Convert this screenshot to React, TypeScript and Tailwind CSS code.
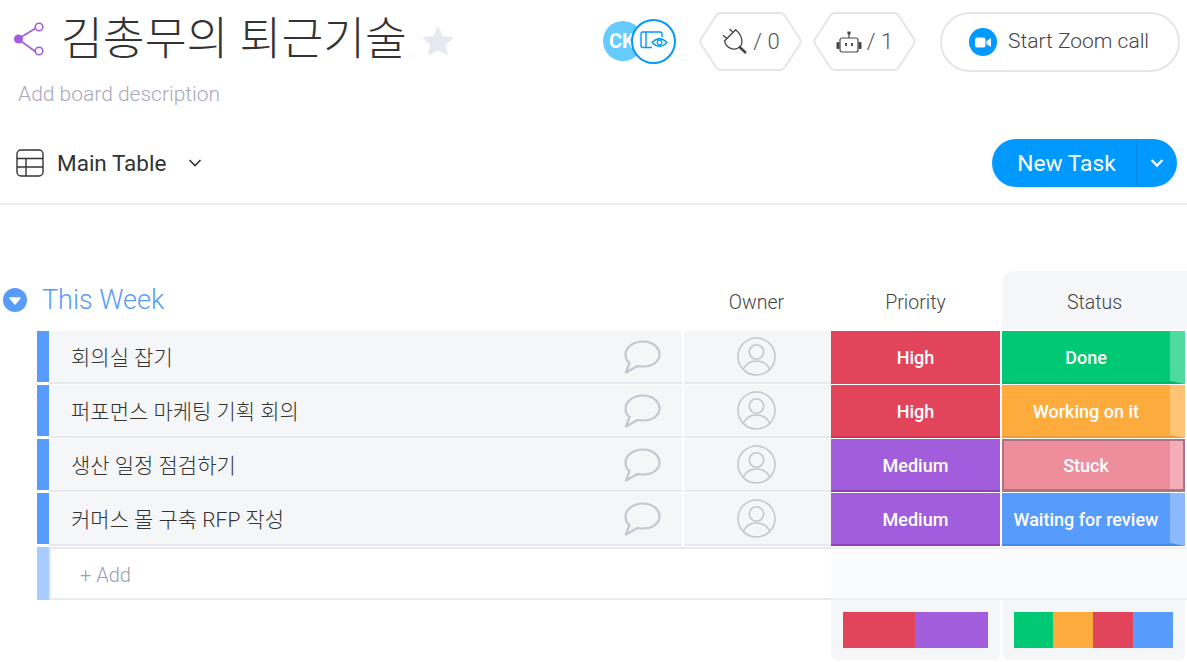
const tasks = [
  { name: '회의실 잡기', priority: 'High', status: 'Done' },
  { name: '퍼포먼스 마케팅 기획 회의', priority: 'High', status: 'Working on it' },
  { name: '생산 일정 점검하기', priority: 'Medium', status: 'Stuck' },
  { name: '커머스 몰 구축 RFP 작성', priority: 'Medium', status: 'Waiting for review' },
]

const priorityClass: Record<string, string> = {
  High: 'bg-[#e2445c] border-[#d0304a]',
  Medium: 'bg-[#a25ddc] border-[#8f3fb8]',
}

const statusClass: Record<string, { main: string; tail: string; fold: string }> = {
  Done: { main: 'bg-[#00c875] border-b-2 border-[#00b86b]', tail: 'bg-[#4ddb9e]', fold: 'bg-[#00b86b]' },
  'Working on it': { main: 'bg-[#fdab3d] border-b-2 border-[#ee9c30]', tail: 'bg-[#fec476]', fold: 'bg-[#ee9c30]' },
  Stuck: { main: 'bg-[#ee8e9d] pr-0.5', tail: 'bg-[#f4aeb9]', fold: '' },
  'Waiting for review': { main: 'bg-[#579bfc] border-b-2 border-[#4389ee]', tail: 'bg-[#8ab9fd]', fold: 'bg-[#4389ee]' },
}

function ShareIcon() {
  return (
    <svg width="32" height="36" viewBox="0 0 32 36" className="shrink-0">
      <path d="M5 17 L23 6 M5 17 L23 30" stroke="#a25ddc" strokeWidth="1.6" fill="none" />
      <circle cx="5.5" cy="17" r="4.5" fill="#a25ddc" />
      <circle cx="26" cy="5" r="3.8" fill="#fff" stroke="#a25ddc" strokeWidth="1.6" />
      <circle cx="26" cy="29" r="3.8" fill="#fff" stroke="#a25ddc" strokeWidth="1.6" />
    </svg>
  )
}

function StarIcon() {
  return (
    <svg width="32" height="30" viewBox="0 0 32 30">
      <path
        d="M16 2 L20 11 L30 12 L22.5 18.5 L25 28 L16 23 L7 28 L9.5 18.5 L2 12 L12 11 Z"
        fill="#e6e9ef"
        stroke="#e6e9ef"
        strokeWidth="2"
        strokeLinejoin="round"
      />
    </svg>
  )
}

function Hexagon({ children }: { children: React.ReactNode }) {
  return (
    <div className="relative flex h-[59px] w-[103px] items-center justify-center text-[22px] font-light text-[#555]">
      <svg width="103" height="59" viewBox="0 0 103 59" className="absolute inset-0">
        <path
          d="M22 1 H81 Q84 1 86 4 L101 27 Q102 29.5 101 32 L86 55 Q84 58 81 58 H22 Q19 58 17 55 L2 32 Q1 29.5 2 27 L17 4 Q19 1 22 1 Z"
          fill="#fff"
          stroke="#e6e6e6"
          strokeWidth="2"
        />
      </svg>
      <span className="relative flex items-center gap-[5px]">{children}</span>
    </div>
  )
}

function PlugIcon() {
  return (
    <svg width="27" height="27" viewBox="0 0 27 27" fill="none" stroke="#444" strokeWidth="1.3">
      <path d="M3.7 12.7 L14.7 1.7 C22 8 23 17 17 20 C12 23 4 19 3.7 12.7 Z" />
      <path d="M5.8 10.6 L2 7.3 M12 4.4 L8.4 1" />
      <path d="M18 18.5 L25 25" strokeWidth="2.4" />
    </svg>
  )
}

function RobotIcon() {
  return (
    <svg width="26" height="22" viewBox="0 0 26 22" fill="none">
      <rect x="4" y="7" width="18" height="14" rx="2" stroke="#444" strokeWidth="1.2" />
      <rect x="0.5" y="11" width="3" height="7" rx="1" fill="#444" />
      <rect x="22.5" y="11" width="3" height="7" rx="1" fill="#444" />
      <rect x="11.5" y="0.5" width="3" height="3" fill="#444" />
      <path d="M13 3 V7" stroke="#444" strokeWidth="1.2" />
      <path d="M10 12 V15 M16 12 V15" stroke="#444" strokeWidth="1.8" />
    </svg>
  )
}

function TableIcon() {
  return (
    <svg width="28" height="28" viewBox="0 0 28 28" fill="none" stroke="#333" strokeWidth="1.4">
      <rect x="1" y="1" width="26" height="26" rx="4" />
      <path d="M1 9.5 H27 M1 18 H27 M10 9.5 V27" />
    </svg>
  )
}

function CommentIcon() {
  return (
    <svg width="37" height="35" viewBox="0 0 37 35" fill="none" stroke="#c5c7d0" strokeWidth="2.2" className="mt-0.5">
      <path
        d="M19 1.5 C28.5 1.5 35.5 7.5 35.5 14.5 C35.5 21.5 28.5 26.5 19 26.5 C17 26.5 15 26.3 13.5 26 L2 32.5 L5.5 23 C2.8 21 1.5 18 1.5 14.5 C1.5 7.5 9.5 1.5 19 1.5 Z"
        strokeLinejoin="round"
      />
    </svg>
  )
}

function PersonIcon() {
  return (
    <svg width="39" height="39" viewBox="0 0 39 39" fill="none" stroke="#c5c7d0" strokeWidth="1.6">
      <circle cx="19.5" cy="19.5" r="18.5" />
      <circle cx="19.5" cy="15" r="7.2" />
      <path d="M6.5 32 C9 26.5 13.5 24 19.5 24 C25.5 24 30 26.5 32.5 32" />
    </svg>
  )
}

function Chevron({ color, size, weight = 1.6 }: { color: string; size: number; weight?: number }) {
  return (
    <svg width={size} height={size} viewBox="0 0 14 14" fill="none" stroke={color} strokeWidth={weight}>
      <path d="M1.5 4 L7 9.5 L12.5 4" />
    </svg>
  )
}

function TaskRow({ name, priority, status, first }: { name: string; priority: string; status: string; first: boolean }) {
  const st = statusClass[status]
  const stuck = status === 'Stuck'
  return (
    <div className="flex h-[53px] mb-px">
      <div className="w-3 h-[51px] ml-[37px] bg-[#579bfc]" />
      <div className="flex w-[633px] items-center justify-between bg-[#f5f6f8] border-b-2 border-[#e6e9ef] pl-[22px] pr-[21px]">
        <span className="pt-[4px] text-[21px] text-[#333] font-light">{name}</span>
        <CommentIcon />
      </div>
      <div className="ml-0.5 flex w-[147px] items-center justify-center bg-[#f5f6f8] border-b-2 border-[#e6e9ef] pr-0.5">
        <PersonIcon />
      </div>
      <div
        className={`flex w-[169px] items-center justify-center border-b-2 pt-px text-[18px] font-medium text-white ${priorityClass[priority]} ${first ? 'border-[#e2445c]' : ''}`}
      >
        {priority}
      </div>
      <div className={`relative ml-0.5 flex w-[183px] ${stuck ? 'border-2 border-b-[3px] border-[#ab7480]' : ''}`}>
        <div className={`flex flex-1 items-center justify-center pt-px text-[18px] font-medium text-white ${st.main}`}>
          {status}
        </div>
        {stuck ? (
          <div className={`w-[13px] ${st.tail}`} />
        ) : (
          <div className={`w-[15px] ${st.fold}`}>
            <div className={`h-full w-full [clip-path:polygon(0_0,100%_0,100%_100%,0_calc(100%-3px))] ${st.tail}`} />
          </div>
        )}
      </div>
    </div>
  )
}

export default function App() {
  return (
    <div className="h-[662px] w-[1187px] overflow-hidden bg-white font-['Roboto','Noto_Sans_CJK_KR',sans-serif] text-[#333]">
      <header className="h-[205px] border-b-2 border-[#f0f0f0]">
        <div className="flex h-[82px] items-start pl-[13px] pt-[12px]">
          <div className="flex items-center pt-[10px]">
            <ShareIcon />
          </div>
          <h1 className="ml-[16px] w-[342px] text-[45.5px] leading-[56px] font-light whitespace-nowrap">김총무의 퇴근기술</h1>
          <div className="ml-[19px] pt-[14px]">
            <StarIcon />
          </div>
          <div className="ml-[149px] flex items-center">
            <div className="relative h-[45px] w-[73px] pt-[9px]">
              <div className="flex h-[40px] w-[40px] items-center overflow-hidden rounded-full bg-[#66ccff] pl-[6px] text-[20px] font-bold text-white">
                CK
              </div>
              <div className="absolute top-[7px] left-[28px] flex h-[45px] w-[45px] items-center justify-center rounded-full border-2 border-[#0099ff] bg-white">
                <svg width="28" height="20" viewBox="0 0 28 20" fill="none" stroke="#0099ff" strokeWidth="1.4" className="mb-0.5">
                  <path d="M12 16.5 H3 Q1 16.5 1 14.5 V3 Q1 1 3 1 H20 Q22 1 22 3 V6" />
                  <path d="M6 1 V16.5" />
                  <path d="M12 11.5 Q19.5 4 27 11.5 Q19.5 19 12 11.5 Z" strokeWidth="1.2" />
                  <circle cx="19.5" cy="11.5" r="2.3" strokeWidth="1.2" />
                </svg>
              </div>
            </div>
          </div>
          <div className="ml-[23px] flex gap-[11px]">
            <Hexagon>
              <PlugIcon />
              <span>/ 0</span>
            </Hexagon>
            <Hexagon>
              <RobotIcon />
              <span>/ 1</span>
            </Hexagon>
          </div>
          <button className="ml-[24px] flex h-[60px] w-[240px] items-center rounded-full border-2 border-[#e6e6e6] pl-[27px] text-[21px] font-light text-[#444]">
            <span className="flex h-[28px] w-[28px] items-center justify-center rounded-full bg-[#0099ff]">
              <svg width="16" height="11" viewBox="0 0 16 11" fill="#fff">
                <rect x="0" y="0.5" width="10.5" height="10" rx="2" />
                <path d="M11.5 4 L16 1 V10 L11.5 7 Z" />
              </svg>
            </span>
            <span className="ml-[11px] pb-px">Start Zoom call</span>
          </button>
        </div>
        <div className="pl-[18px] text-[21px] leading-6 font-light text-[#a8a9bb]">Add board description</div>
        <div className="mt-[33px] flex h-[48px] items-center justify-between pl-[16px] pr-[10px]">
          <div className="flex items-center">
            <TableIcon />
            <span className="ml-[13px] pt-px text-[22.5px]">Main Table</span>
            <span className="ml-[22px]">
              <Chevron color="#333" size={14} />
            </span>
          </div>
          <div className="flex h-[48px] w-[185px] items-center rounded-full bg-[#0099ff] text-white">
            <span className="flex h-full w-[145px] items-center justify-center border-r border-[#0086e0] pl-[5px] pt-[3px] text-[22.7px]">
              New Task
            </span>
            <span className="flex flex-1 items-center justify-center">
              <Chevron color="#fff" size={14} weight={2.4} />
            </span>
          </div>
        </div>
      </header>

      <section className="mt-[66px] flex h-[60px] items-stretch">
        <div className="flex w-[684px] items-center pl-[3px] pb-[2px]">
          <svg width="24" height="24" viewBox="0 0 24 24">
            <circle cx="12" cy="12" r="12" fill="#579bfc" />
            <path d="M7 10 H17 L12 16 Z" fill="#fff" stroke="#fff" strokeWidth="1.5" strokeLinejoin="round" />
          </svg>
          <span className="ml-[15px] text-[27px] font-light text-[#579bfc]">This Week</span>
        </div>
        <div className="flex w-[147px] items-center justify-center pt-[4px] pr-0.5 text-[19.5px] font-light text-[#444]">Owner</div>
        <div className="flex w-[169px] items-center justify-center pt-[4px] text-[19.5px] font-light text-[#444]">Priority</div>
        <div className="ml-0.5 mb-0.5 flex w-[185px] items-center justify-center rounded-tl-xl bg-[#f5f6f8] pt-[6px] text-[19.5px] font-light text-[#444]">
          Status
        </div>
      </section>

      <div>
        {tasks.map((t, i) => (
          <TaskRow key={t.name} {...t} first={i === 0} />
        ))}
      </div>

      <div className="ml-[37px] flex h-[53px]">
        <div className="w-3 bg-[#a9ccff]" />
        <div className="flex w-[782px] items-center border-y-2 border-l-2 border-[#e6e9ef] bg-white pl-[29px] pt-[3px] text-[20px] font-light text-[#9a9cb2]">
          + Add
        </div>
        <div className="flex-1 border-y-2 border-[#edeff4] bg-[#fafbfd]" />
      </div>

      <div className="ml-[831px] flex gap-0.5">
        <div className="flex h-[60px] w-[169px] items-center justify-center rounded-b-md bg-[#f5f6f8]">
          <div className="flex h-[36px] w-[145px]">
            <div className="w-[72px] bg-[#e2445c]" />
            <div className="w-[73px] bg-[#a25ddc]" />
          </div>
        </div>
        <div className="flex h-[60px] w-[183px] items-center justify-center rounded-b-md bg-[#f5f6f8]">
          <div className="flex h-[36px] w-[159px]">
            <div className="w-[39px] bg-[#00c875]" />
            <div className="w-[40px] bg-[#fdab3d]" />
            <div className="w-[40px] bg-[#e2445c]" />
            <div className="w-[40px] bg-[#579bfc]" />
          </div>
        </div>
      </div>
    </div>
  )
}
